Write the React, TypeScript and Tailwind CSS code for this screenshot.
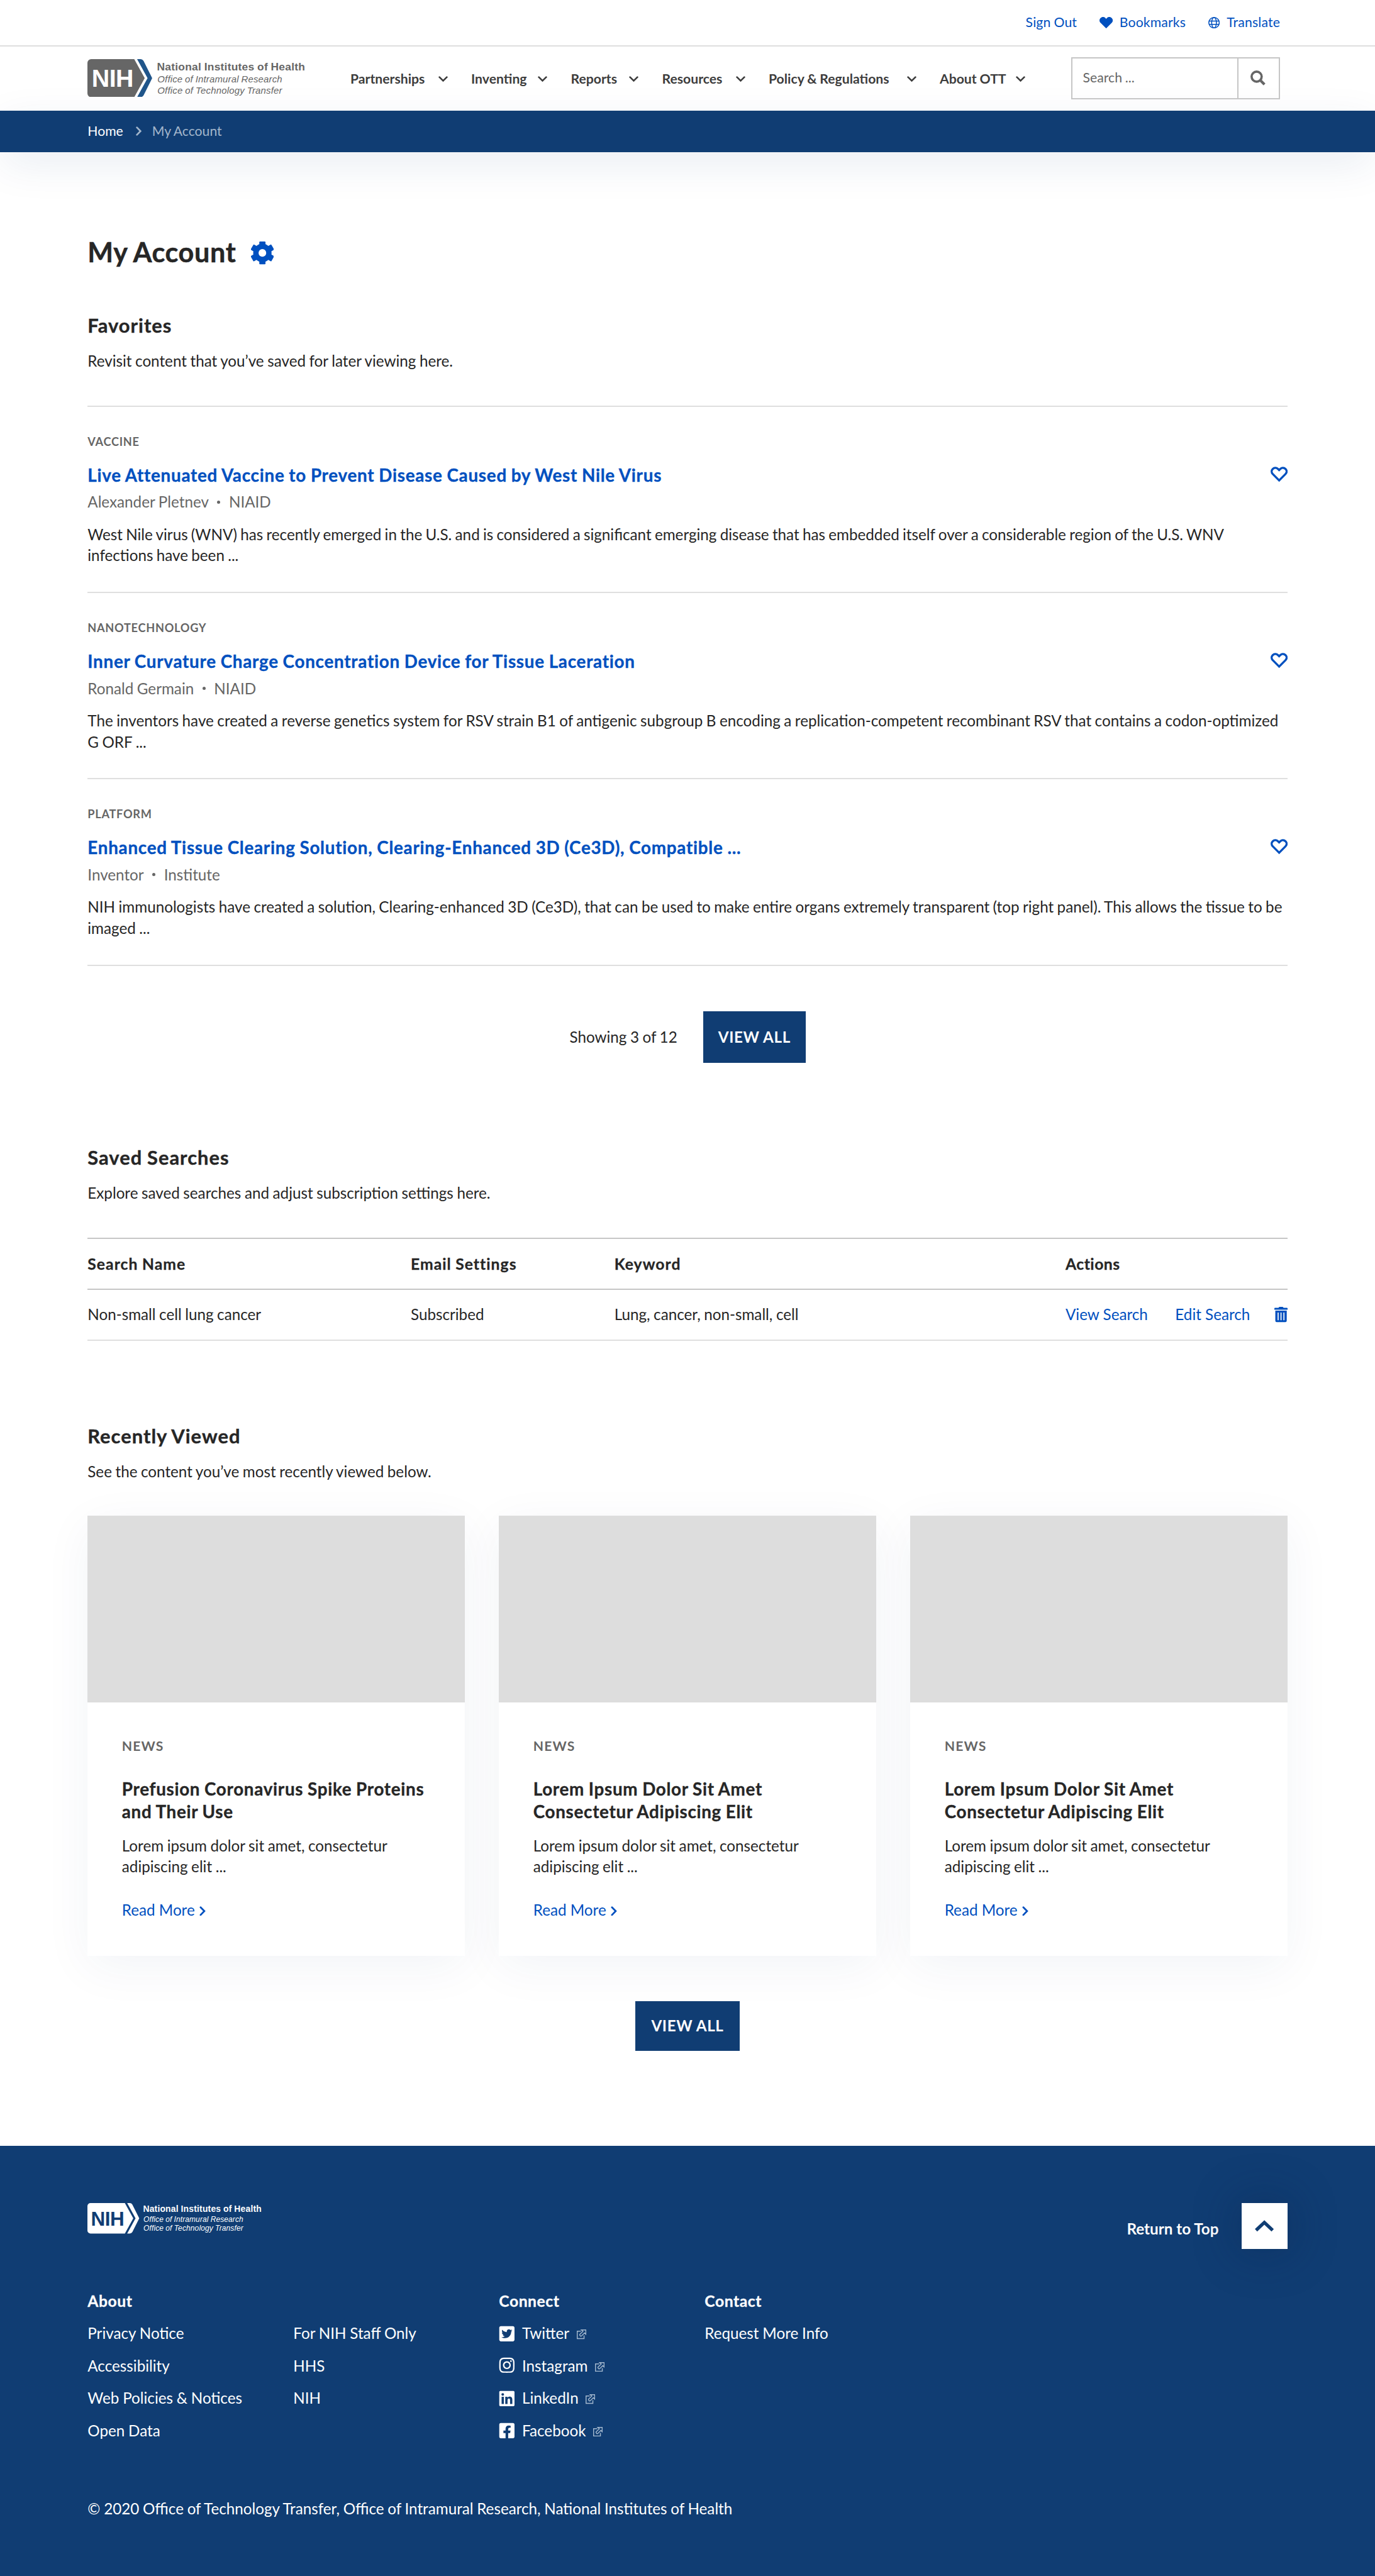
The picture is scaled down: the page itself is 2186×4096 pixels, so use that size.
import React from "react";
import { FaTwitterSquare, FaInstagram, FaLinkedin, FaFacebookSquare } from "react-icons/fa";

/* ---------- icons ---------- */

type IconProps = { className?: string };

const ChevronDown = ({ className = "" }: IconProps) => (
  <svg viewBox="0 0 20 12" className={className} fill="none" stroke="currentColor" strokeWidth="3.6" strokeLinecap="round">
    <path d="M2.2 2.2 10 9.8 17.8 2.2" />
  </svg>
);

const ChevronRight = ({ className = "" }: IconProps) => (
  <svg viewBox="0 0 12 20" className={className} fill="none" stroke="currentColor" strokeWidth="3.6" strokeLinecap="round">
    <path d="M2.2 2.2 9.8 10 2.2 17.8" />
  </svg>
);

const ChevronUp = ({ className = "" }: IconProps) => (
  <svg viewBox="0 0 40 24" className={className} fill="none" stroke="currentColor" strokeWidth="7" strokeLinecap="butt">
    <path d="M2.5 21.5 20 5 37.5 21.5" />
  </svg>
);

const HeartSolid = ({ className = "" }: IconProps) => (
  <svg viewBox="0 0 28 24" className={className} fill="currentColor">
    <path d="M14 24 2.2 12.2C-.7 9.3-.7 5 2.2 2.2 5-.6 9.3-.7 12.2 2L14 3.8 15.8 2C18.7-.7 23-.6 25.8 2.2c2.9 2.8 2.9 7.1 0 10L14 24Z" />
  </svg>
);

const HeartOutline = ({ className = "" }: IconProps) => (
  <svg viewBox="0 0 36 32" className={className} fill="none" stroke="currentColor" strokeWidth="4.4">
    <path d="M18 29 4.8 15.800C1.400 12.300 1.400 8 4.500 4.900 7.700 1.800 12.200 1.700 15.300 4.600L18 7.300 20.700 4.600C23.800 1.700 28.300 1.800 31.500 4.900 34.600 8 34.600 12.300 31.200 15.800L18 29Z" />
  </svg>
);

const Globe = ({ className = "" }: IconProps) => (
  <svg viewBox="0 0 24 24" className={className} fill="none" stroke="currentColor" strokeWidth="2">
    <circle cx="12" cy="12" r="11" />
    <ellipse cx="12" cy="12" rx="5" ry="11" />
    <path d="M1.800 8.500h20.400M1.800 15.500h20.400" />
  </svg>
);

const Magnifier = ({ className = "" }: IconProps) => (
  <svg viewBox="0 0 32 32" className={className} fill="none" stroke="currentColor">
    <circle cx="13" cy="13" r="10.600" strokeWidth="4.800" />
    <path d="M20.500 20.500 29.500 29.500" strokeWidth="5.600" />
  </svg>
);

const Gear = ({ className = "" }: IconProps) => (
  <svg viewBox="0 0 48 48" className={className}>
    <g fill="currentColor">
      <circle cx="24" cy="24" r="19.300" />
      <rect x="17.500" y="0" width="13" height="48" rx="1.500" />
      <rect x="17.500" y="-1" width="13" height="50" rx="1.500" transform="rotate(60 24 24)" />
      <rect x="17.500" y="-1" width="13" height="50" rx="1.500" transform="rotate(120 24 24)" />
    </g>
    <circle cx="24" cy="24" r="8" fill="#fff" />
  </svg>
);

const Trash = ({ className = "" }: IconProps) => (
  <svg viewBox="0 0 28 32" className={className} fill="currentColor">
    <path d="M0 3.500C0 2.500.8 2 1.800 2H8.500L10.500 0H17.500L19.500 2H26.200C27.200 2 28 2.500 28 3.500V6H0Z" />
    <path fillRule="evenodd" d="M2 8H26V29A3 3 0 0 1 23 32H5A3 3 0 0 1 2 29ZM6.800 12V28H9V12ZM12.900 12V28H15.100V12ZM19 12V28H21.200V12Z" />
  </svg>
);

const External = ({ className = "" }: IconProps) => (
  <svg viewBox="0 0 20 20" className={className} fill="none" stroke="currentColor" strokeWidth="1.900">
    <path d="M8.500 3.600H.95V19.050H15.200V12.500" />
    <path d="M9.600.95H19.050V10L16.200 7.200 9.600 13.800Q8.300 14.600 7.300 13.400L6.400 12.200Q5.600 11 6.600 10L12.900 3.900Z" />
  </svg>
);

/* ---------- logo ---------- */

type LogoProps = { body: string; arrow: string; initials: string; text: string; className?: string };

const Logo = ({ body, arrow, initials, text, className = "" }: LogoProps) => (
  <svg viewBox="0 0 460 80" className={className} fontFamily="'Liberation Sans', Arial, sans-serif">
    <path d="M8 0H98.300L120.300 40 98.300 80H8A8 8 0 0 1 0 72V8A8 8 0 0 1 8 0Z" fill={body} />
    <path d="M104.300 0H111Q115.500 0 118 4L136 40 118 76Q115.500 80 111 80H104.300L126.300 40Z" fill={arrow} />
    <text x="9" y="58.600" fontSize="52" fontWeight="700" textLength="88" fill={initials}>NIH</text>
    <g fill={text}>
      <text x="146" y="23.300" fontSize="23" fontWeight="700" textLength="311">National Institutes of Health</text>
      <text x="147" y="49.300" fontSize="19.800" fontStyle="italic" textLength="262">Office of Intramural Research</text>
      <text x="147" y="73.300" fontSize="19.800" fontStyle="italic" textLength="262">Office of Technology Transfer</text>
    </g>
  </svg>
);

/* ---------- data ---------- */

const nav = [
  { label: "Partnerships", width: "w-[155px]" },
  { label: "Inventing", width: "w-[121.500px]" },
  { label: "Reports", width: "w-[108px]" },
  { label: "Resources", width: "w-[132.500px]" },
  { label: "Policy & Regulations", width: "w-[235px]" },
  { label: "About OTT", width: "w-[136px]" },
];

const favorites = [
  {
    tag: "VACCINE",
    title: "Live Attenuated Vaccine to Prevent Disease Caused by West Nile Virus",
    author: "Alexander Pletnev",
    institute: "NIAID",
    spacing: "[word-spacing:-0.950px]",
    lines: [
      "West Nile virus (WNV) has recently emerged in the U.S. and is considered a significant emerging disease that has embedded itself over a considerable region of the U.S. WNV",
      "infections have been ...",
    ],
  },
  {
    tag: "NANOTECHNOLOGY",
    title: "Inner Curvature Charge Concentration Device for Tissue Laceration",
    author: "Ronald Germain",
    institute: "NIAID",
    spacing: "[word-spacing:-0.720px]",
    lines: [
      "The inventors have created a reverse genetics system for RSV strain B1 of antigenic subgroup B encoding a replication-competent recombinant RSV that contains a codon-optimized",
      "G ORF ...",
    ],
  },
  {
    tag: "PLATFORM",
    title: "Enhanced Tissue Clearing Solution, Clearing-Enhanced 3D (Ce3D), Compatible ...",
    author: "Inventor",
    institute: "Institute",
    spacing: "[word-spacing:-0.780px]",
    lines: [
      "NIH immunologists have created a solution, Clearing-enhanced 3D (Ce3D), that can be used to make entire organs extremely transparent (top right panel). This allows the tissue to be",
      "imaged ...",
    ],
  },
];

const cards = [
  { title: ["Prefusion Coronavirus Spike Proteins", "and Their Use"] },
  { title: ["Lorem Ipsum Dolor Sit Amet", "Consectetur Adipiscing Elit"] },
  { title: ["Lorem Ipsum Dolor Sit Amet", "Consectetur Adipiscing Elit"] },
];

const social = [
  { label: "Twitter", Icon: FaTwitterSquare, shift: "" },
  { label: "Instagram", Icon: FaInstagram, shift: "mb-[3px]" },
  { label: "LinkedIn", Icon: FaLinkedin, shift: "" },
  { label: "Facebook", Icon: FaFacebookSquare, shift: "" },
];

/* ---------- sections ---------- */

const SectionIntro = ({ title, text }: { title: string; text: string }) => (
  <>
    <h2 className="h-[40px] text-[30.900px] font-bold leading-[40px] tracking-[1px] [-webkit-text-stroke:0.400px]">{title}</h2>
    <p className="mt-[19px] h-[34px] leading-[34px]">{text}</p>
  </>
);

const ButtonDark = ({ className }: { className: string }) => (
  <button className={`${className} bg-[#103d73] font-bold tracking-[0.600px] text-white`}>VIEW ALL</button>
);

const Header = () => (
  <header>
    <div className="flex h-[74px] items-center justify-end border-b-2 border-[#dfdfdf] pr-[151px] text-[21.200px] tracking-[0.150px] text-[#0050bf]">
      <a>Sign Out</a>
      <a className="ml-[36px] flex items-center">
        <HeartSolid className="mr-[10.500px] h-[18.200px] w-[21.200px]" />
        Bookmarks
      </a>
      <a className="ml-[36px] flex items-center">
        <Globe className="mr-[11px] h-[18.200px] w-[18.200px]" />
        Translate
      </a>
    </div>
    <div className="flex h-[101.500px] items-center pb-[1.500px] pl-[139.300px]">
      <Logo body="#666" arrow="#20558a" initials="#fff" text="#666" className="h-[60.600px] w-[348.200px]" />
      <nav className="ml-[69.500px] flex items-center gap-[37px] pt-[3px]">
        {nav.map((n) => (
          <a key={n.label} className={`${n.width} flex items-center justify-between whitespace-nowrap text-[21.200px] font-bold text-[#3d3d3d] [word-spacing:-0.300px]`}>
            {n.label}
            <ChevronDown className="h-[9px] w-[15px]" />
          </a>
        ))}
      </nav>
      <div className="ml-auto mr-[151.400px] flex h-[67px] w-[332px] border-2 border-[#c6c6c6] text-[21.200px] text-[#666]">
        <span className="flex flex-1 items-center pl-[17px]">Search ...</span>
        <span className="flex w-[66px] items-center border-l-2 border-[#c6c6c6] pl-[19px]">
          <Magnifier className="h-[24.200px] w-[24.200px]" />
        </span>
      </div>
    </div>
    <div className="flex h-[66.600px] items-center bg-[#103d73] pl-[139.300px] text-[21.200px] text-white shadow-[0_19px_68px_-4px_rgba(16,61,115,0.100)]">
      <a>Home</a>
      <ChevronRight className="ml-[20.500px] h-[15px] w-[9px] text-[#a3b6cb]" />
      <span className="ml-[16.500px] text-[#a3b6cb]">My Account</span>
    </div>
  </header>
);

const Favorites = () => (
  <section className="mt-[68px]">
    <SectionIntro title="Favorites" text="Revisit content that you’ve saved for later viewing here." />
    <ul className="mt-[54px] border-b-2 border-[#dfdfdf]">
      {favorites.map((f) => (
        <li key={f.tag} className="h-[296.200px] whitespace-nowrap border-t-2 border-[#dfdfdf] pt-[43px]">
          <div className="h-[24px] text-[18.200px] font-bold leading-[24px] tracking-[0.700px] text-[#666]">{f.tag}</div>
          <div className="mt-[24px] flex h-[36px] items-center justify-between">
            <h3 className="text-[27.800px] font-bold leading-[36px] tracking-[0.740px] text-[#0050bf] [-webkit-text-stroke:0.350px]">{f.title}</h3>
            <HeartOutline className="mb-[4px] h-[24.200px] w-[27.200px] text-[#0050bf]" />
          </div>
          <div className="mt-[7.500px] flex h-[34px] items-center text-[#666]">
            <span>{f.author}</span>
            <span className="mx-[13.500px] h-[5px] w-[5px] rounded-full bg-[#666]" />
            <span>{f.institute}</span>
          </div>
          <p className={`${f.spacing} mt-[17.500px] leading-[33.300px]`}>
            {f.lines[0]}
            <br />
            {f.lines[1]}
          </p>
        </li>
      ))}
    </ul>
    <div className="mt-[72.300px] flex items-center justify-center gap-[41.500px]">
      <span>Showing 3 of 12</span>
      <ButtonDark className="h-[81.700px] w-[162.300px]" />
    </div>
  </section>
);

const SavedSearches = () => {
  const cols = "grid grid-cols-[513.700px_323.700px_717.300px_1fr] items-center";
  return (
    <section className="mt-[131.800px]">
      <SectionIntro title="Saved Searches" text="Explore saved searches and adjust subscription settings here." />
      <div className="mt-[54px] border-y-2 border-[#c6c6c6]">
        <div className={`${cols} h-[78.300px] pb-[1px] text-[24.700px] font-bold tracking-[1.050px] [-webkit-text-stroke:0.300px]`}>
          <span>Search Name</span>
          <span>Email Settings</span>
          <span>Keyword</span>
          <span className="tracking-[0.500px]">Actions</span>
        </div>
      </div>
      <div className={`${cols} h-[81.600px] border-b-2 border-[#dfdfdf]`}>
        <span>Non-small cell lung cancer</span>
        <span>Subscribed</span>
        <span>Lung, cancer, non-small, cell</span>
        <span className="flex items-center text-[#0050bf] [word-spacing:0]">
          <a>View Search</a>
          <a className="ml-[43.500px]">Edit Search</a>
          <Trash className="ml-auto h-[24.200px] w-[21.200px]" />
        </span>
      </div>
    </section>
  );
};

const RecentlyViewed = () => (
  <section className="mt-[131.800px]">
    <SectionIntro title="Recently Viewed" text="See the content you’ve most recently viewed below." />
    <div className="mt-[53px] grid grid-cols-3 gap-[54.500px]">
      {cards.map((c, i) => (
        <article key={i} className="h-[699.400px] bg-white shadow-[0_17px_72px_rgba(16,61,115,0.055)]">
          <div className="h-[296.600px] bg-[#dddddd]" />
          <div className="px-[54.500px] pt-[56px]">
            <div className="h-[26px] text-[21.200px] font-bold leading-[26px] tracking-[1.100px] text-[#666]">NEWS</div>
            <h3 className="mt-[38.300px] whitespace-nowrap text-[27.800px] font-bold leading-[36px] tracking-[0.700px] [-webkit-text-stroke:0.350px]">
              {c.title[0]}
              <br />
              {c.title[1]}
            </h3>
            <p className="mt-[19px] leading-[33.300px]">
              Lorem ipsum dolor sit amet, consectetur
              <br />
              adipiscing elit ...
            </p>
            <a className="mt-[36px] flex h-[34px] items-center text-[#0050bf] [word-spacing:0]">
              Read More
              <ChevronRight className="ml-[7.500px] mt-[2px] h-[15.600px] w-[9.800px]" />
            </a>
          </div>
        </article>
      ))}
    </div>
    <div className="mt-[72.400px] flex justify-center">
      <ButtonDark className="h-[79px] w-[166px]" />
    </div>
  </section>
);

const FooterHeading = ({ children }: { children?: React.ReactNode }) => (
  <h4 className="mb-[9px] h-[34px] text-[24.700px] font-bold leading-[34px] tracking-[0.550px] [-webkit-text-stroke:0.300px]">{children}</h4>
);

const FooterColumn = ({ title, links }: { title?: string; links: string[] }) => (
  <div>
    <FooterHeading>{title}</FooterHeading>
    {links.map((l) => (
      <a key={l} className="flex h-[51.500px] items-center whitespace-nowrap">{l}</a>
    ))}
  </div>
);

const Footer = () => (
  <footer className="mt-[151.400px] h-[683.800px] bg-[#103d73] pl-[139.300px] pr-[139.300px] pt-[90.800px] text-white [word-spacing:-0.400px]">
    <div className="flex h-[72.700px] items-start justify-between">
      <Logo body="#fff" arrow="#fff" initials="#103d73" text="#fff" className="h-[48.500px] w-[278.600px]" />
      <div className="flex items-center">
        <span className="mr-[36.500px] mt-[9px] font-bold [word-spacing:0]">Return to Top</span>
        <span className="flex h-[72.700px] w-[72.700px] items-center justify-center bg-white text-[#103d73] shadow-[0_0_75px_rgba(10,35,75,0.450)]">
          <ChevronUp className="h-[18.200px] w-[30.200px]" />
        </span>
      </div>
    </div>
    <div className="mt-[66px] grid h-[249px] grid-cols-[327px_327px_327px_1fr]">
      <FooterColumn title="About" links={["Privacy Notice", "Accessibility", "Web Policies & Notices", "Open Data"]} />
      <FooterColumn links={["For NIH Staff Only", "HHS", "NIH"]} />
      <div>
        <FooterHeading>Connect</FooterHeading>
        {social.map(({ label, Icon, shift }) => (
          <a key={label} className="flex h-[51.500px] items-center">
            <span className={`${shift} -ml-[1.500px] mr-[10.500px] flex w-[27.700px] justify-start`}>
              <Icon className="h-[27.700px] w-[27.700px]" />
            </span>
            {label}
            <External className="ml-[11.500px] mt-[3px] h-[15.200px] w-[15.200px] text-[#a3b8ce]" />
          </a>
        ))}
      </div>
      <FooterColumn title="Contact" links={["Request More Info"]} />
    </div>
    <p className="mt-[80.800px] h-[34px] leading-[34px] [word-spacing:-0.500px]">
      © 2020 Office of Technology Transfer, Office of Intramural Research, National Institutes of Health
    </p>
  </footer>
);

export default function App() {
  return (
    <div className="h-[4096px] w-[2186px] overflow-hidden bg-white font-['Lato','Noto_Sans',sans-serif] text-[24.220px] text-[#262626] [word-spacing:-0.650px]">
      <Header />
      <main className="px-[139.300px] pt-[128px]">
        <div className="flex h-[60px] items-center">
          <h1 className="text-[43.200px] font-bold leading-[60px] tracking-[0.600px] [-webkit-text-stroke:0.500px]">My Account</h1>
          <Gear className="ml-[23.500px] mt-[5px] h-[36.300px] w-[36.300px] text-[#0050c0]" />
        </div>
        <Favorites />
        <SavedSearches />
        <RecentlyViewed />
      </main>
      <Footer />
    </div>
  );
}
